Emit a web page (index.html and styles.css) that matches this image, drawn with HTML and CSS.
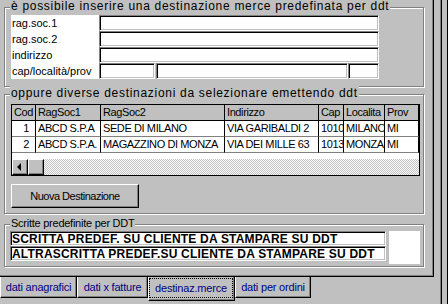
FILE: index.html
```html
<!DOCTYPE html>
<html lang="it">
<head>
  <meta charset="UTF-8" />
  <title>Destinazioni merce</title>
  <link rel="stylesheet" href="styles.css">
</head>
<body>
  <div class="window">
    <div class="tabctl">
      <div class="page">

        <div class="group g1">
          <span class="group-title big">è possibile inserire una destinazione merce predefinata per ddt</span>
          <div class="dest-form">
            <div class="labels">
              <div>rag.soc.1</div>
              <div>rag.soc.2</div>
              <div>indirizzo</div>
              <div>cap/località/prov</div>
            </div>
            <div class="fields">
              <div class="field"></div>
              <div class="field"></div>
              <div class="field"></div>
              <div class="field-row">
                <div class="field f-cap"></div>
                <div class="field f-loc"></div>
                <div class="field f-prov"></div>
              </div>
            </div>
          </div>
        </div>

        <div class="group g2">
          <span class="group-title big">oppure diverse destinazioni da selezionare emettendo ddt</span>
          <div class="grid">
            <div class="grid-head">
              <span>Cod</span><span>RagSoc1</span><span>RagSoc2</span><span>Indirizzo</span><span>Cap</span><span>Localita</span><span>Prov</span>
            </div>
            <div class="grid-row">
              <span class="num">1</span><span>ABCD S.P.A</span><span>SEDE DI MILANO</span><span>VIA GARIBALDI 2</span><span>10100</span><span>MILANO</span><span>MI</span>
            </div>
            <div class="grid-row">
              <span class="num">2</span><span>ABCD S.P.A.</span><span>MAGAZZINO DI MONZA</span><span>VIA DEI MILLE 63</span><span>10130</span><span>MONZA</span><span>MI</span>
            </div>
            <div class="grid-fill"></div>
            <div class="hscroll">
              <div class="sb-btn raised"><i class="arrow-left"></i></div>
              <div class="sb-thumb raised"></div>
              <div class="sb-track"></div>
            </div>
          </div>
          <button class="btn raised">Nuova Destinazione</button>
        </div>

        <div class="group g3">
          <span class="group-title">Scritte predefinite per DDT</span>
          <div class="notes">
            <div class="field note">SCRITTA PREDEF. SU CLIENTE DA STAMPARE SU DDT</div>
            <div class="field note">ALTRASCRITTA PREDEF.SU CLIENTE DA STAMPARE SU DDT</div>
          </div>
          <div class="swatch"></div>
        </div>

      </div>
      <div class="tabs">
        <div class="tab t1">dati anagrafici</div>
        <div class="tab t2">dati x fatture</div>
        <div class="tab t3 active"><span class="focus">destinaz.merce</span></div>
        <div class="tab t4">dati per ordini</div>
      </div>
    </div>
    <div class="edge"><div class="edge-line"></div></div>
  </div>
</body>
</html>
```

FILE: styles.css
```css
* { box-sizing: border-box; }
body { margin: 0; width: 448px; height: 304px; overflow: hidden; background: #c0c0c0; font-family: "Liberation Sans", Arial, sans-serif; font-size: 11px; color: #000; }

.window { display: flex; height: 304px; }
.tabctl { width: 434px; }
.page { height: 277px; padding: 7px 0 0 4px; border-right: 1px solid #000; border-bottom: 1px solid #000; box-shadow: inset -1px -1px 0 #808080; }

/* group box con bordo inciso */
.group { position: relative; width: 420px; border: 1px solid #808080; box-shadow: inset 1px 1px 0 #fff, 1px 1px 0 #fff; }
.group-title { position: absolute; left: 5px; top: -8px; padding: 0 1px; background: #c0c0c0; line-height: 13px; letter-spacing: -0.25px; white-space: nowrap; }
.group-title.big { top: -9px; font-size: 12px; line-height: 14px; letter-spacing: 0.7px; }

.raised { background: #c0c0c0; border: 1px solid; border-color: #fff #000 #000 #fff; box-shadow: inset -1px -1px 0 #808080; }
.field { height: 16px; background: #fff; border: 1px solid; border-color: #808080 #fff #fff #808080; box-shadow: inset 1px 1px 0 #000, inset -1px -1px 0 #c0c0c0; }

.g1 { height: 80px; padding: 7px 0 0 6px; }
.dest-form { display: flex; }
.labels { width: 88px; background: #fff; }
.labels div { height: 16px; line-height: 16px; padding-left: 1px; white-space: nowrap; }
.fields { width: 280px; }
.field-row { display: flex; }
.f-cap { width: 56px; }
.f-loc { width: 192px; margin-left: 1px; }
.f-prov { width: 31px; }

.g2 { margin-top: 7px; height: 120px; padding: 9px 0 0 6px; }
.grid { width: 409px; height: 72px; border: 1px solid #000; background: #fff; display: flex; flex-direction: column; }
.grid-head, .grid-row { display: grid; grid-template-columns: 24px 65px 124px 94px 25px 41px 34px; height: 16px; }
.grid-head span, .grid-row span { padding-left: 2px; line-height: 15px; letter-spacing: -0.4px; white-space: nowrap; overflow: hidden; border-right: 1px solid #000; }
.grid-head span { background: #c0c0c0; border-bottom: 1px solid #000; }
.grid-row span { border-bottom: 1px solid #808080; }
.grid-row .num { text-align: right; padding-right: 6px; }
.grid-fill { flex: 1; }
.hscroll { display: flex; height: 16px; }
.sb-btn { width: 16px; display: flex; align-items: center; justify-content: center; }
.arrow-left { width: 0; height: 0; border-right: 4px solid #000; border-top: 4px solid transparent; border-bottom: 4px solid transparent; margin-left: -2px; }
.sb-thumb { width: 16px; }
.sb-track { flex: 1; background: repeating-conic-gradient(#c0c0c0 0 25%, #fff 0 50%) 0 0 / 2px 2px; }

.btn { display: block; width: 128px; height: 24px; margin-top: 8px; padding: 0; font-family: inherit; font-size: 11px; letter-spacing: -0.5px; color: #000; line-height: 20px; }

.g3 { margin-top: 10px; height: 43px; padding: 6px 0 0 5px; display: flex; }
.notes { width: 376px; }
.note { height: 15px; padding: 1px 0 0 1px; font-size: 12px; font-weight: bold; line-height: 12px; letter-spacing: 0.2px; white-space: nowrap; overflow: hidden; }
.swatch { width: 31px; height: 33px; margin-left: 3px; background: #fff; }

.tabs { display: flex; align-items: flex-start; }
.tab { height: 21px; padding-top: 4px; text-align: center; color: #000080; line-height: 13px; letter-spacing: -0.2px; white-space: nowrap; border-left: 1px solid #fff; border-right: 1px solid #000; border-bottom: 1px solid #000; box-shadow: inset -1px -1px 0 #808080; }
.t1 { width: 77px; }
.t2 { width: 71px; }
.t3 { width: 87px; }
.t4 { width: 76px; }
.tab.active { height: 24px; padding: 1px 1px 2px 0; }
.focus { display: block; height: 100%; padding-top: 3px; border: 1px dotted #000; }

.edge { flex: 1; padding-left: 6px; border-right: 1px solid #000; }
.edge-line { width: 2px; height: 100%; border-left: 1px solid #808080; border-right: 1px solid #000; }
```
